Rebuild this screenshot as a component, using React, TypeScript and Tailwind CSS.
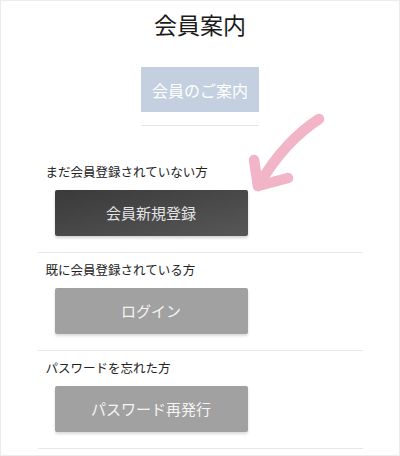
import React from 'react';

const font = { fontFamily: '"Noto Sans CJK JP", "Noto Sans", sans-serif' };

interface SectionProps {
  label: string;
  button: string;
  dark?: boolean;
  first?: boolean;
}

const Section: React.FC<SectionProps> = ({ label, button, dark = false, first = false }) => {
  return (
    <div className={first ? 'w-[325px]' : 'w-[325px] border-t border-[#e8e8e8]'}>
      <p className={`${first ? 'pt-0' : 'pt-2'} pl-2 text-[12.5px] leading-[18px] text-[#222]`}>{label}</p>
      <button
        type="button"
        className={
          dark
            ? 'mt-[9px] ml-[17px] flex h-[46px] w-[193px] items-center justify-center rounded-[2px] bg-gradient-to-br from-[#3a3a3a] to-[#575757] text-[15px] text-[#e4e4e4] shadow-[0_2px_3px_rgba(0,0,0,0.18)]'
            : 'mt-[9px] ml-[17px] flex h-[46px] w-[193px] items-center justify-center rounded-[2px] bg-[#a1a1a1] text-[15px] text-[#f4f4f4] shadow-[0_2px_3px_rgba(0,0,0,0.15)]'
        }
      >
        {button}
      </button>
      <div className="h-4" />
    </div>
  );
};

const App: React.FC = () => {
  return (
    <div style={font} className="relative h-[456px] w-[400px] overflow-hidden border border-[#ececec] bg-white">
      <div className="flex flex-col items-center">
        <h1 className="mt-[7px] text-[23px] leading-[32px] text-[#1a1a1a]">会員案内</h1>
        <div className="mt-[27px] flex h-[45px] w-[118px] items-center justify-center bg-[#c4cfdf] text-[16px] text-white">
          会員のご案内
        </div>
        <div className="mt-[13px] h-px w-[118px] bg-[#e4e4e4]" />
        <div className="mt-[37px] flex flex-col">
          <Section first dark label="まだ会員登録されていない方" button="会員新規登録" />
          <Section label="既に会員登録されている方" button="ログイン" />
          <Section label="パスワードを忘れた方" button="パスワード再発行" />
          <div className="h-px w-[325px] bg-[#e8e8e8]" />
        </div>
      </div>
      <svg className="absolute left-0 top-0" width="400" height="456" viewBox="0 0 400 456" fill="none">
        <g stroke="#f2b5c7" strokeWidth="10.5" strokeLinecap="round" strokeLinejoin="round">
          <path d="M318 118 Q 284 140 259 182" />
          <path d="M257 185 L253 159" />
          <path d="M257 185 L287 177" />
        </g>
      </svg>
    </div>
  );
};

export default App;
